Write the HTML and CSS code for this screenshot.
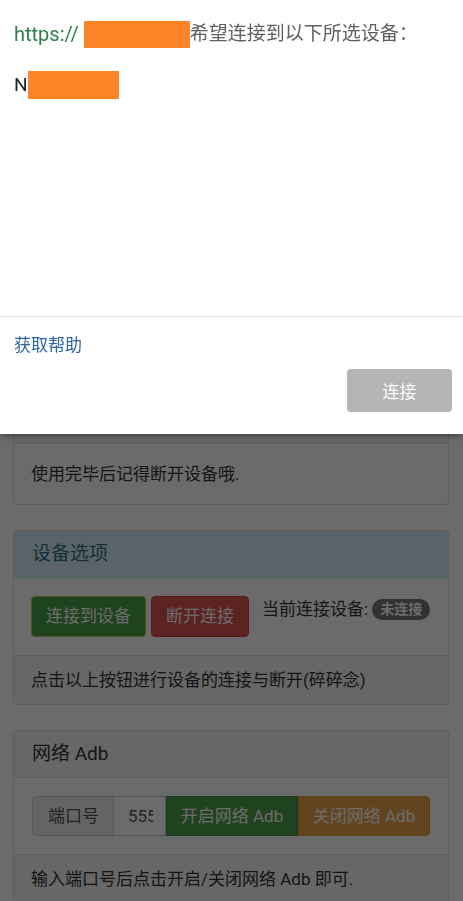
FILE: index.html
```html
<!DOCTYPE html>
<html lang="zh-CN">
<head>
    <meta charset="UTF-8">
    <meta name="viewport" content="width=device-width, initial-scale=1.0">
    <title>WebADB</title>
    <link rel="stylesheet" href="styles.css">
</head>
<body>
    <div class="page">
        <div class="panel">
            <div class="panel-heading">提示</div>
            <div class="panel-body">使用完毕后记得断开设备哦.</div>
        </div>

        <div class="panel">
            <div class="panel-heading info">设备选项</div>
            <div class="panel-body row">
                <button class="btn success focused">连接到设备</button>
                <button class="btn danger">断开连接</button>
                <span class="status">当前连接设备: <span class="badge">未连接</span></span>
            </div>
            <div class="panel-footer">点击以上按钮进行设备的连接与断开(碎碎念)</div>
        </div>

        <div class="panel">
            <div class="panel-heading">网络 Adb</div>
            <div class="panel-body">
                <div class="input-group">
                    <span class="addon">端口号</span>
                    <input type="text" class="port" value="5555">
                    <button class="btn success">开启网络 Adb</button>
                    <button class="btn warning">关闭网络 Adb</button>
                </div>
            </div>
            <div class="panel-footer">输入端口号后点击开启/关闭网络 Adb 即可.</div>
        </div>
    </div>

    <!-- usb chooser over the page -->
    <div class="dim"></div>
    <div class="chooser">
        <p class="origin"><span class="scheme">https://</span> <span class="redact host"></span>希望连接到以下所选设备：</p>
        <p class="device">N<span class="redact name"></span></p>
        <div class="chooser-foot">
            <a class="help">获取帮助</a>
            <div class="actions">
                <button class="connect">连接</button>
            </div>
        </div>
    </div>
</body>
</html>
```

FILE: styles.css
```css
body {
    margin: 0;
    background: #fff;
    color: #333;
    font-family: Roboto, "Noto Sans CJK SC", sans-serif;
    font-size: 17px;
}

.page {
    padding: 396px 14px 40px 13px; /* top is under the chooser */
}

.panel {
    border: 1px solid #ddd;
    border-radius: 4px;
    margin-bottom: 25px;
    background: #fff;
}
.panel-heading {
    padding: 11px 18px;
    font-size: 19px;
    line-height: 24px;
    background: #f5f5f5;
    border-bottom: 1px solid #ddd;
    border-radius: 3px 3px 0 0;
}
.panel-heading.info {
    background: #d9edf7;
    color: #31708f;
    border-color: #bce8f1;
}
.panel-body {
    padding: 18px 17px;
    line-height: 24px;
}
.panel-footer {
    padding: 12px 17px;
    line-height: 24px;
    background: #f5f5f5;
    border-top: 1px solid #ddd;
    border-radius: 0 0 3px 3px;
}

.row {
    display: flex;
    align-items: flex-start;
    gap: 5px;
}
.btn {
    font-family: inherit;
    font-size: 17px;
    line-height: 23px;
    padding: 8px 14px;
    border: 1px solid transparent;
    border-radius: 4px;
    color: #fff;
}
.success {
    background: #4a9f4a;
    border-color: #3f923f;
}
.success.focused {
    border-color: #c9c04a;
}
.danger {
    background: #d9534f;
    border-color: #d43f3a;
}
.warning {
    background: #e9a548;
    border-color: #e39a34;
}
.status {
    margin-left: 8px;
    padding-top: 1px;
    white-space: nowrap;
}
.badge {
    display: inline-block;
    background: #777;
    color: #fff;
    font-size: 14px;
    font-weight: bold;
    line-height: 19px;
    padding: 1px 8px;
    border-radius: 11px;
    vertical-align: 1px;
}

.input-group {
    display: flex;
    margin-left: 1px;
    width: 398px;
}
.addon {
    padding: 7px 14px 7px 15px;
    line-height: 24px;
    background: #eee;
    border: 1px solid #ccc;
    border-radius: 4px 0 0 4px;
    color: #555;
}
.port {
    width: 52px;
    box-sizing: border-box;
    padding: 0 12px 0 14px;
    border: 1px solid #ccc;
    border-left: none;
    font-family: inherit;
    font-size: 17px;
    color: #555;
}
.input-group .btn {
    flex: 1;
    border-radius: 0;
    padding: 7px 0;
    line-height: 24px;
}
.input-group .btn:last-child {
    border-radius: 0 4px 4px 0;
}

.dim {
    position: fixed;
    top: 0;
    left: 0;
    right: 0;
    bottom: 0;
    background: rgba(0, 0, 0, 0.58);
}
.chooser {
    position: fixed;
    top: 0;
    left: 0;
    right: 0;
    height: 434px;
    background: #fff;
    box-shadow: 0 2px 6px rgba(0, 0, 0, 0.35);
    display: flex;
    flex-direction: column;
}
.origin, .device {
    margin: 0;
    padding-left: 14px;
    font-size: 19px;
    line-height: 28px;
    color: #5f5f5f;
    display: flex;
    align-items: center;
}
.origin {
    margin-top: 20px;
}
.device {
    margin-top: 23px;
    color: #222;
}
.scheme {
    color: #2e7d4c;
    font-size: 20px;
    margin-right: 5px;
}
.redact {
    display: inline-block;
    background: #fd8427;
}
.host {
    width: 106px;
    height: 27px;
}
.name {
    width: 91px;
    height: 28px;
}
.chooser-foot {
    margin-top: auto;
    height: 117px;
    border-top: 1px solid #e4e4e4;
    padding: 0 11px 0 14px;
}
.help {
    display: block;
    margin-top: 16px;
    color: #2d64a5;
    font-size: 17px;
    line-height: 24px;
}
.actions {
    display: flex;
    justify-content: flex-end;
    margin-top: 12px;
}
.connect {
    width: 105px;
    height: 43px;
    border: none;
    border-radius: 4px;
    background: #b5b5b5;
    color: #fff;
    font-family: inherit;
    font-size: 17px;
}
```
